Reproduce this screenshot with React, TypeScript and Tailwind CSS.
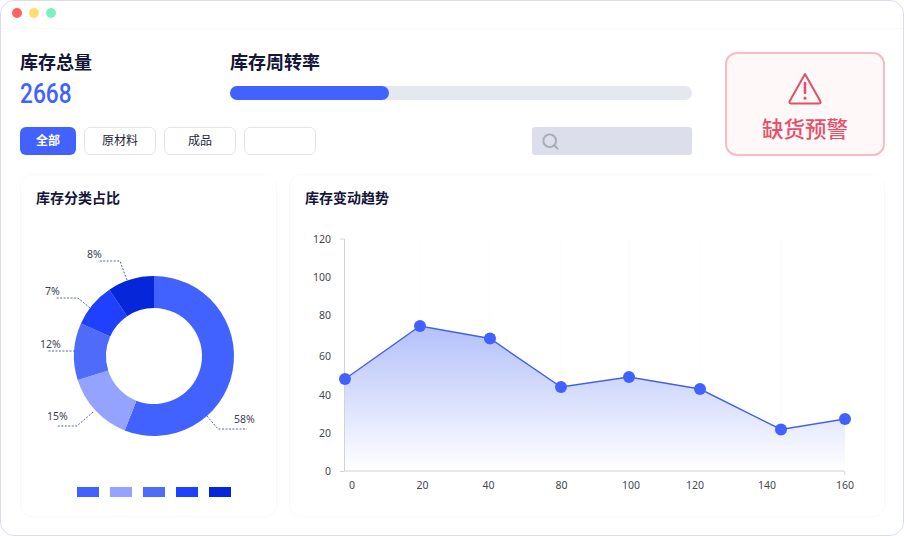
import { Search } from "lucide-react";

const FONT = "font-['Noto_Sans','Noto_Sans_CJK_SC',sans-serif]";

const FILTERS = [
  { label: "全部", active: true },
  { label: "原材料" },
  { label: "成品" },
  { label: "" },
];

const CX = 154;
const CY = 356;
const SLICES = [
  { from: 0, to: 201.5, color: "#4262ff" },
  { from: 201.5, to: 252.5, color: "#94a3ff" },
  { from: 252.5, to: 294, color: "#4e6bfa" },
  { from: 294, to: 326, color: "#1f40ff" },
  { from: 326, to: 360, color: "#0526d9" },
];

const LEADERS = [
  { text: "8%", x: 87, y: 258, points: "127,280 120,261 98,261" },
  { text: "7%", x: 45, y: 295, points: "90,308 78,298 55,298" },
  { text: "12%", x: 40, y: 348, points: "75,351 48,351" },
  { text: "15%", x: 47, y: 420, points: "93,412 77,426 57,426" },
  { text: "58%", x: 234, y: 423, points: "207,416 218,429 247,429" },
];

const LEGEND = ["#4262ff", "#94a3ff", "#4e6bfa", "#1f40ff", "#0526d9"];

const POINTS = [
  [345, 379],
  [420, 326],
  [490, 338.5],
  [561, 387],
  [629, 377],
  [700, 389],
  [781, 429.5],
  [845, 419],
];
const Y_LABELS = [
  ["120", 239],
  ["100", 277],
  ["80", 315],
  ["60", 356],
  ["40", 395],
  ["20", 433],
  ["0", 471],
] as const;
const X_LABELS = [
  ["0", 352],
  ["20", 422.5],
  ["40", 488.5],
  ["80", 561.5],
  ["100", 631],
  ["120", 695],
  ["140", 767],
  ["160", 845],
] as const;

function polar(r: number, deg: number) {
  const a = (deg * Math.PI) / 180;
  return [CX + r * Math.sin(a), CY - r * Math.cos(a)];
}

function slicePath(from: number, to: number) {
  const R = 80;
  const r = 48;
  const end = to === 360 ? 359.99 : to;
  const [x1, y1] = polar(R, from);
  const [x2, y2] = polar(R, end);
  const [x3, y3] = polar(r, end);
  const [x4, y4] = polar(r, from);
  const large = end - from > 180 ? 1 : 0;
  return `M${x1} ${y1}A${R} ${R} 0 ${large} 1 ${x2} ${y2}L${x3} ${y3}A${r} ${r} 0 ${large} 0 ${x4} ${y4}Z`;
}

function DonutChart() {
  return (
    <svg width="255" height="276" viewBox="21 208 255 276" className="block">
      {SLICES.map((s) => (
        <path key={s.from} d={slicePath(s.from, s.to)} fill={s.color} />
      ))}
      {LEADERS.map((l) => (
        <g key={l.text}>
          <polyline points={l.points} fill="none" stroke="#5a5fb8" strokeWidth="1" strokeDasharray="2 1.5" />
          <text x={l.x} y={l.y} fontSize="10.5" fill="#3c3f52">
            {l.text}
          </text>
        </g>
      ))}
    </svg>
  );
}

function TrendChart() {
  const line = POINTS.map((p) => p.join(",")).join(" ");
  return (
    <svg width="594" height="288" viewBox="290 226 594 288" className="block">
      <defs>
        <linearGradient id="area" gradientUnits="userSpaceOnUse" x1="0" y1="326" x2="0" y2="471">
          <stop offset="0" stopColor="#b3c0fa" />
          <stop offset="1" stopColor="#ffffff" />
        </linearGradient>
      </defs>
      {[420, 490, 561, 629, 700, 781].map((x) => (
        <line key={x} x1={x} y1="239" x2={x} y2="471" stroke="#fbfbfd" />
      ))}
      <polygon points={`345,471 ${line} 845,471`} fill="url(#area)" />
      <path d="M344.5 239V471.5M340 239H344.5M340 471.5H344.5" stroke="#d2d3d8" fill="none" />
      <path d="M344 471H844M844.5 471V475" stroke="#dfe0e4" strokeWidth="1.4" fill="none" />
      <polyline points={line} fill="none" stroke="#4560e8" strokeWidth="1.4" />
      {POINTS.map(([x, y]) => (
        <circle key={x} cx={x} cy={y} r="6" fill="#4262ff" />
      ))}
      {Y_LABELS.map(([t, y]) => (
        <text key={t} x="331" y={y + 3.5} fontSize="10.5" fill="#45474f" textAnchor="end">
          {t}
        </text>
      ))}
      {X_LABELS.map(([t, x]) => (
        <text key={t} x={x} y="489" fontSize="10.5" fill="#45474f" textAnchor="middle">
          {t}
        </text>
      ))}
    </svg>
  );
}

function AlertIcon() {
  return (
    <svg width="36" height="34" viewBox="0 0 36 34" fill="none" stroke="#e44f68" strokeWidth="2" strokeLinejoin="round" strokeLinecap="round">
      <path d="M18 2L33.5 29.5Q34 31.5 32 31.5H4Q2 31.5 2.5 29.5Z" />
      <path d="M18 11V21" strokeWidth="2.6" />
      <path d="M18 26V26.2" strokeWidth="3" />
    </svg>
  );
}

export default function App() {
  return (
    <div className={`${FONT} w-[904px] h-[536px] overflow-hidden bg-white`}>
      <div className="h-full border border-[#dcdcef] rounded-[14px] overflow-hidden">
        {/* Title bar */}
        <div className="h-[28px] flex items-center gap-[7px] pl-[11px] pb-[3px] border-b border-[#f8f8fb]">
          <span className="w-[10px] h-[10px] rounded-full bg-[#ff6161]" />
          <span className="w-[10px] h-[10px] rounded-full bg-[#ffdc6e]" />
          <span className="w-[10px] h-[10px] rounded-full bg-[#7eefc4]" />
        </div>

        <div className="pl-[19px] pt-[23px]">
          {/* Top row */}
          <div className="flex">
            <div className="w-[672px]">
              <div className="flex h-[75px]">
                <div className="w-[210px]">
                  <h1 className="-mt-[1px] text-[18px] leading-[22px] font-bold text-[#14163a]">库存总量</h1>
                  <p className="mt-[4px] w-fit origin-left scale-x-[0.81] font-['Roboto'] text-[28px] leading-[34px] font-medium text-[#4262ff]">
                    2668
                  </p>
                </div>
                <div className="flex-1">
                  <h2 className="-mt-[1px] text-[18px] leading-[22px] font-bold text-[#14163a]">库存周转率</h2>
                  <div className="mt-[13px] h-[14px] rounded-full bg-[#e6e8f0]">
                    <div className="h-full w-[159px] rounded-full bg-[#4262ff]" />
                  </div>
                </div>
              </div>
              <div className="flex items-center">
                <div className="flex gap-[8px]">
                  {FILTERS.map((f, i) => (
                    <button
                      key={i}
                      type="button"
                      className={
                        f.active
                          ? "w-[56px] h-[28px] rounded-[6px] bg-[#4262ff] text-white text-[12px] font-bold"
                          : "w-[72px] h-[28px] rounded-[6px] border border-[#e2e5ec] bg-white text-[#22243a] text-[12px]"
                      }
                    >
                      {f.label}
                    </button>
                  ))}
                </div>
                <div className="ml-auto w-[160px] h-[28px] rounded-[3px] bg-[#dcdeec] flex items-center pl-[9px]">
                  <Search size={19} strokeWidth={2.5} className="mt-[1px] text-[#a8abb8]" />
                </div>
              </div>
            </div>

            {/* Alert */}
            <div className="ml-[33px] w-[160px] h-[104px] rounded-[12px] border-2 border-[#fbb9c4] bg-[#fff8f9] flex flex-col items-center pt-[18px]">
              <AlertIcon />
              <span className="mt-[8px] text-[21.5px] leading-[30px] font-medium text-[#e8506a]">缺货预警</span>
            </div>
          </div>

          {/* Charts */}
          <div className="flex gap-[12px] mt-[18px]">
            <section className="w-[257px] h-[343px] rounded-[12px] border border-[#f8f9fc]">
              <h3 className="pl-[15px] pt-[13px] text-[14px] leading-[20px] font-bold text-[#14163a]">库存分类占比</h3>
              <DonutChart />
              <div className="flex gap-[11px] pl-[56px] pt-[3px]">
                {LEGEND.map((c) => (
                  <span key={c} className="w-[22px] h-[10px]" style={{ backgroundColor: c }} />
                ))}
              </div>
            </section>
            <section className="w-[596px] h-[343px] rounded-[12px] border border-[#f8f9fc]">
              <h3 className="pl-[15px] pt-[13px] text-[14px] leading-[20px] font-bold text-[#14163a]">库存变动趋势</h3>
              <div className="pt-[18px]">
                <TrendChart />
              </div>
            </section>
          </div>
        </div>
      </div>
    </div>
  );
}
